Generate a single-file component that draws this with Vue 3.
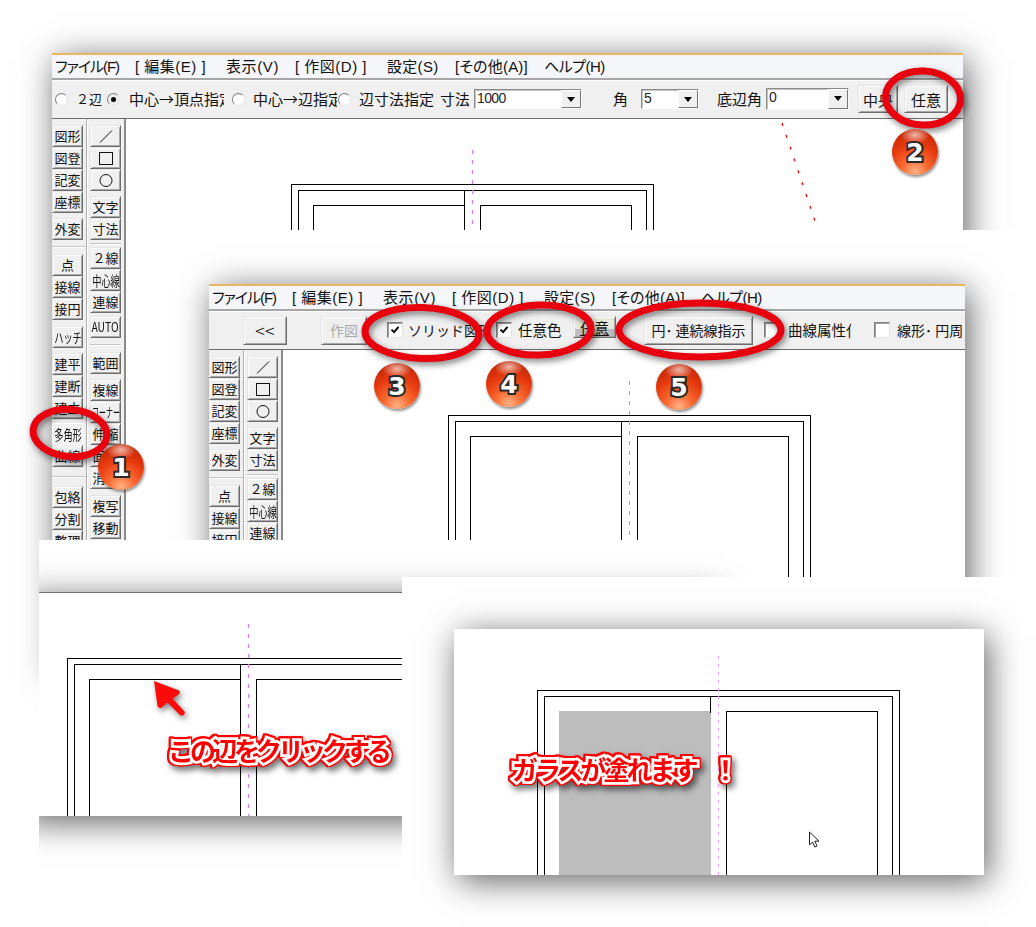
<script setup>
const menus = [
  { t: 'ファイル(F)', w: 65, ls: -1 }, { t: '[ 編集(E) ]', w: 76, ls: .5 }, { t: '表示(V)', w: 54, ls: .6 }, { t: '[ 作図(D) ]', w: 77, ls: .5 },
  { t: '設定(S)', w: 53, ls: .3 }, { t: '[その他(A)]', w: 74, ls: .2 }, { t: 'ヘルプ(H)', w: 60, ls: -.5 }
]

function col(list) {
  let y = 0
  return list.map(([t, top]) => {
    const sep = t === '-'
    const item = { t, sep, m: top - 119 - y }
    y = top - 119 + (sep ? 2 : 22)
    return item
  })
}
const colA = col([['図形', 125], ['図登', 147], ['記変', 169], ['座標', 191], ['外変', 218], ['-', 246], ['点', 254], ['接線', 276], ['接円', 298], ['ハッチ', 326], ['建平', 353], ['建断', 375], ['建立', 397], ['多角形', 423], ['曲線', 445], ['-', 476], ['包絡', 486], ['分割', 508], ['整理', 530]])
const colB = col([['line', 125], ['rect', 147], ['circle', 169], ['文字', 196], ['寸法', 218], ['-', 243], ['２線', 247], ['中心線', 269], ['連線', 291], ['AUTO', 316], ['-', 344], ['範囲', 352], ['複線', 379], ['コーナー', 401], ['伸縮', 423], ['面取', 445], ['消去', 467], ['複写', 495], ['移動', 517]])
const squeezed = { 'ハッチ': 'sq1', '多角形': 'sq1', '中心線': 'sq1', 'コーナー': 'sq2', 'AUTO': 'sq3' }

const layers = [
  { id: 'a', box: { left: 0, top: 0, width: 1036, height: 927 }, win: { left: 52, top: 53, width: 911, height: 620 }, chrome: 'circle', ox: 165, oy: 65, dash: true },
  { id: 'b', box: { left: 126, top: 230, width: 910, height: 347 }, win: { left: 83, top: 54, width: 756, height: 400 }, chrome: 'solid', ox: 165, oy: 65 },
  { id: 'c', box: { left: 39, top: 540, width: 726, height: 387 }, win: { left: -20, top: 52, width: 701, height: 224 }, chrome: 'none', ox: 48, oy: 65 },
  { id: 'd', box: { left: 402, top: 577, width: 634, height: 350 }, win: { left: 52, top: 52, width: 530, height: 246 }, chrome: 'bare', ox: 83, oy: 61, filled: true }
]
const px = (o) => Object.fromEntries(Object.entries(o).map(([k, v]) => [k, v + 'px']))

const rings = [
  { cx: 70, cy: 433, rx: 37, ry: 23.5, r: 5 },
  { cx: 923, cy: 98, rx: 37.5, ry: 27, r: 3 },
  { cx: 422, cy: 333, rx: 57, ry: 25.5, r: 2 },
  { cx: 539, cy: 330, rx: 52, ry: 25, r: -2 },
  { cx: 700, cy: 330, rx: 81, ry: 27, r: 0 }
]
const badges = [
  { n: 1, left: 98, top: 444 },
  { n: 2, left: 892, top: 129 },
  { n: 3, left: 374, top: 363 },
  { n: 4, left: 486, top: 361 },
  { n: 5, left: 656, top: 364 }
]
</script>

<template>
  <div class="page">
    <section v-for="l in layers" :key="l.id" class="layer" :style="px(l.box)">
      <div class="win" :class="'win-' + l.chrome" :style="px(l.win)">
        <template v-if="l.chrome === 'circle' || l.chrome === 'solid'">
          <nav class="menu">
            <span v-for="m in menus" :key="m.t" :style="{ width: m.w + 'px', letterSpacing: m.ls + 'px' }">{{ m.t }}</span>
          </nav>

          <div v-if="l.chrome === 'circle'" class="tools">
            <i class="radio r1"></i><span class="lb l1">２辺</span>
            <i class="radio on r2"></i><span class="lb l2">中心→頂点指定</span>
            <i class="radio r3"></i><span class="lb l3">中心→辺指定</span>
            <i class="radio r4"></i><span class="lb l4">辺寸法指定</span>
            <span class="lb l5">寸法</span>
            <div class="combo c1"><span>1000</span><b></b></div>
            <span class="lb l6">角</span>
            <div class="combo c2"><span>5</span><b></b></div>
            <span class="lb l7">底辺角</span>
            <div class="combo c3"><span>0</span><b></b></div>
            <button class="btn b1">中央</button>
            <button class="btn b2">任意</button>
          </div>

          <div v-else class="tools">
            <button class="btn s1">&lt;&lt;</button>
            <button class="btn s2">作図</button>
            <i class="check k1"><svg viewBox="0 0 16 16"><path d="M4 7.500l3 3 5-6" fill="none" stroke="#000" stroke-width="2.200"/></svg></i>
            <span class="lb m1">ソリッド図形</span>
            <i class="check k2"><svg viewBox="0 0 16 16"><path d="M4 7.500l3 3 5-6" fill="none" stroke="#000" stroke-width="2.200"/></svg></i>
            <span class="lb m2">任意色</span>
            <button class="btn s3">任意</button>
            <button class="btn s4">円･ 連続線指示</button>
            <i class="check k3"></i>
            <span class="lb m3">曲線属性化</span>
            <i class="check k4"></i>
            <span class="lb m4">線形･ 円周</span>
          </div>
        </template>

        <div class="body">
          <aside v-if="l.chrome === 'circle' || l.chrome === 'solid'" class="side">
            <div v-for="(c, ci) in [colA, colB]" :key="ci" class="col" :class="ci ? 'col-b' : 'col-a'">
              <template v-for="(b, i) in c" :key="i">
                <div v-if="b.sep" class="hsep" :style="{ marginTop: b.m + 'px' }"></div>
                <button v-else class="btn tb" :class="{ active: b.t === '多角形' && l.chrome === 'circle' }" :style="{ marginTop: b.m + 'px' }">
                  <svg v-if="b.t === 'line'" width="16" height="16" viewBox="0 0 16 16"><path d="M2 14.500L14 2.500" stroke="#111" fill="none"/></svg>
                  <svg v-else-if="b.t === 'rect'" width="16" height="16" viewBox="0 0 16 16"><rect x="1.500" y="2.500" width="13" height="12" stroke="#111" fill="none"/></svg>
                  <svg v-else-if="b.t === 'circle'" width="16" height="16" viewBox="0 0 16 16"><circle cx="8" cy="8.500" r="6" stroke="#111" fill="none"/></svg>
                  <span v-else :class="squeezed[b.t]">{{ b.t }}</span>
                </button>
              </template>
            </div>
          </aside>

          <div class="canvas">
            <svg v-if="l.dash" class="draw"><line class="reddash" x1="656" y1="4" x2="689" y2="102"/></svg>
            <svg class="draw" shape-rendering="crispEdges">
              <g :transform="`translate(${l.ox} ${l.oy})`">
                <rect x="0.500" y="0.500" width="362" height="900" class="ln"/>
                <rect x="7.500" y="6.500" width="348" height="900" class="ln"/>
                <line x1="181.500" y1="-34" x2="181.500" y2="400" class="pink" :class="{ thin: l.filled }"/>
                <template v-if="l.filled">
                  <rect x="22" y="21" width="152" height="400" fill="#bdbdbd"/>
                  <line x1="173.500" y1="6" x2="173.500" y2="23" class="ln"/>
                </template>
                <template v-else>
                  <rect x="22.500" y="21.500" width="151" height="900" class="ln"/>
                  <line x1="173.500" y1="6" x2="173.500" y2="21" class="ln"/>
                </template>
                <rect x="189.500" y="21.500" width="151" height="900" class="ln"/>
              </g>
            </svg>
          </div>
        </div>
      </div>
    </section>

    <svg class="marks" width="1036" height="927">
      <ellipse v-for="(e, i) in rings" :key="i" :cx="e.cx" :cy="e.cy" :rx="e.rx" :ry="e.ry" :transform="`rotate(${e.r} ${e.cx} ${e.cy})`" class="ring"/>
      <path d="M154 681L179 690.500Q181 692.500 178.500 694.500L172.500 698.500L184.500 711.500Q185.500 714.500 182.500 715.500L180.500 715.500L167.500 702.500L161 708Q158 708.500 157.500 706Z" fill="#ff0a0a"/>
    </svg>
    <svg class="pointer" width="14" height="18" viewBox="0 0 14 18">
      <path d="M1.500 1v13l3-3 2.200 5 2.300-1-2.200-4.800H11z" fill="#fff" stroke="#222" stroke-width="1"/>
    </svg>

    <div v-for="b in badges" :key="b.n" class="badge" :style="px({ left: b.left, top: b.top })">
      <span>{{ b.n }}</span>
    </div>

    <div class="call call-a">この辺をクリックする</div>
    <div class="call call-b">ガラスが塗れます<span class="bang">！</span></div>
  </div>
</template>

<style>
html, body { margin: 0; background: #fff; }
</style>

<style scoped>
.page {
  position: relative;
  width: 1036px;
  height: 927px;
  overflow: hidden;
  background: #fff;
  font-family: "Noto Sans CJK JP", sans-serif;
  color: #111;
}
.layer { position: absolute; overflow: hidden; background: #fff; }
.win {
  position: absolute;
  display: flex;
  flex-direction: column;
  background: #fff;
  box-shadow: 4px 6px 32px rgba(0, 0, 0, .62);
}
.win-circle, .win-solid { border-top: 2px solid #e9b75f; box-sizing: border-box; }
.win-none { border-top: 1px solid #707070; box-sizing: border-box; }

.menu {
  height: 23px;
  box-sizing: border-box;
  display: flex;
  gap: 15px;
  align-items: center;
  padding-left: 3px;
  background: #f5f6f9;
  font-family: "Liberation Sans", "Noto Sans CJK JP", sans-serif;
  font-feature-settings: "palt";
  font-size: 15px;
  line-height: 23px;
  white-space: nowrap;
}
.menu span { display: block; flex: none; }
.tools {
  height: 41px;
  box-sizing: border-box;
  display: flex;
  align-items: center;
  background: #f0f0f0;
  border-top: 2px solid #a6a6a6;
  border-bottom: 1px solid #6d6d6d;
  box-shadow: inset 0 1px 0 #fff;
  font-size: 15px;
  white-space: nowrap;
}
.lb { display: block; overflow: hidden; flex: none; line-height: 20px; }
.radio {
  display: block; flex: none; width: 13px; height: 13px; box-sizing: border-box;
  border-radius: 50%; background: #fff; position: relative;
  border: 1px solid; border-color: #7f7f7f #e4e4e4 #e4e4e4 #7f7f7f;
}
.radio.on { background: #eee; }
.radio.on::after {
  content: ""; position: absolute; left: 3px; top: 3px; width: 5px; height: 5px;
  border-radius: 50%; background: #000;
}
.r1 { margin-left: 3px; } .l1 { margin-left: 8px; width: 26px; font-size: 13px; }
.r2 { margin-left: 5px; } .l2 { margin-left: 9px; width: 95px; }
.r3 { margin-left: 8px; } .l3 { margin-left: 8px; width: 84px; }
.r4 { margin-left: 1px; } .l4 { margin-left: 8px; width: 75px; }
.l5 { margin-left: 6px; width: 29px; }
.c1 { margin-left: 5px; width: 108px; height: 20px; }
.l6 { margin-left: 31px; width: 15px; }
.c2 { margin-left: 13px; width: 58px; height: 20px; }
.l7 { margin-left: 18px; width: 45px; }
.c3 { margin-left: 4px; width: 83px; height: 22px; }
.combo {
  flex: none; box-sizing: border-box; display: flex; justify-content: space-between;
  background: #fff;
  border: 1px solid; border-color: #8a8a8a #fbfbfb #fbfbfb #8a8a8a;
  box-shadow: inset 1px 1px 0 #c4c4c4;
  font-family: "Liberation Sans", sans-serif;
  font-size: 14px; line-height: 17px; padding-left: 2px; color: #222; letter-spacing: -.6px;
}
.combo b {
  flex: none; width: 20px; background: #f0f0f0; position: relative; box-sizing: border-box;
  border: 1px solid; border-color: #fff #777 #777 #fff;
}
.combo b::after {
  content: ""; position: absolute; left: 5px; top: 6px;
  border: 4px solid transparent; border-top: 5px solid #000; border-bottom: 0;
}

.btn {
  display: flex; align-items: center; justify-content: center; flex: none;
  box-sizing: border-box; margin: 0; padding: 0;
  font: inherit; color: #111; white-space: nowrap; overflow: hidden;
  background: #f0f0f0;
  border: 1px solid; border-color: #e6e6e6 #6e6e6e #6e6e6e #e6e6e6;
  box-shadow: inset 1px 1px 0 #fff, inset -1px -1px 0 #a8a8a8;
}
.b1 { margin-left: 9px; width: 40px; height: 28px; }
.b2 { margin-left: 6px; width: 44px; height: 28px; }
.s1 { margin-left: 34px; width: 44px; height: 29px; font-size: 18px; font-weight: 300; }
.s2 { margin-left: 34px; width: 46px; height: 29px; font-size: 14px; color: #a8a8a8; }
.check {
  display: block; flex: none; width: 16px; height: 16px; box-sizing: border-box; background: #fff;
  border: 1px solid; border-color: #7f7f7f #e4e4e4 #e4e4e4 #7f7f7f;
  box-shadow: inset 1px 1px 0 #a0a0a0;
}
.check svg { display: block; width: 14px; height: 14px; }
.k1 { margin-left: 20px; }
.m1 { margin-left: 5px; width: 76px; font-size: 14px; }
.k2 { margin-left: 12px; }
.m2 { margin-left: 6px; width: 44px; font-size: 14.500px; }
.s3 {
  margin-left: 11px; margin-bottom: 6px; width: 43px; height: 22px; font-size: 14.500px;
  background: linear-gradient(#e9e9da 0 62%, #bcbcbc 62%);
  text-decoration: underline;
}
.s4 { margin-left: 28px; width: 109px; height: 29px; font-size: 14px; }
.k3 { margin-left: 11px; }
.m3 { margin-left: 8px; width: 63px; font-size: 14.500px; }
.k4 { margin-left: 23px; }
.m4 { margin-left: 7px; width: 67px; font-size: 14px; }

.body { flex: 1; min-height: 0; display: flex; }
.side {
  width: 74px; flex: none; box-sizing: border-box; display: flex;
  background: #f0f0f0;
  border-right: 2px solid #8c8c8c;
}
.col { flex: none; width: 31px; display: flex; flex-direction: column; }
.col-a { width: 34px; border-right: 1px solid #b0b0b0; box-shadow: 1px 0 0 #fff; }
.col-b { margin-left: 3px; width: 31px; }
.col-a .tb { width: 31px; }
.hsep { flex: none; height: 2px; background: #fff; border-top: 1px solid #c4c4c4; box-sizing: border-box; }
.tb { width: 31px; height: 22px; font-size: 13px; line-height: 20px; }
.tb.active {
  background: repeating-conic-gradient(#fff 0 25%, #e8e8e8 0 50%) 0 0 / 2px 2px;
  box-shadow: none;
  border-color: #fff;
}
.sq1 { display: inline-block; font-size: 14px; transform: scaleX(.66); }
.sq2 { display: inline-block; transform: scaleX(.54); }
.sq3 { display: inline-block; transform: scaleX(.8); }

.canvas { flex: 1; min-width: 0; position: relative; background: #fff; overflow: hidden; }
.draw { position: absolute; inset: 0; width: 100%; height: 100%; }
.ln { fill: none; stroke: #000; stroke-width: 1; }
.pink { stroke: #ff70f0; stroke-width: 1; stroke-dasharray: 4 6; }
.pink.thin { stroke: #f3a0f3; stroke-dasharray: 3 5; }
.reddash { stroke: #f40000; stroke-width: 1.300; stroke-dasharray: 3 9.500; }

.marks {
  position: absolute; left: 0; top: 0; pointer-events: none;
  filter: drop-shadow(2px 3px 3px rgba(0, 0, 0, .5));
}
.ring { fill: none; stroke: #e8000f; stroke-width: 7; }
.pointer { position: absolute; left: 808px; top: 831px; }

.badge {
  position: absolute; width: 46px; height: 46px; border-radius: 50%;
  display: flex; align-items: center; justify-content: center;
  background:
    radial-gradient(ellipse 32% 20% at 50% 13%, rgba(255, 255, 255, .65), rgba(255, 255, 255, 0) 100%),
    radial-gradient(circle at 50% 92%, #ffb184 0, #f9682f 28%, #e5380d 58%, #c42806 85%, #a82004 100%);
  box-shadow: 1px 2px 3px rgba(0, 0, 0, .45);
}
.badge span {
  font: 700 25px/1 "DejaVu Sans", sans-serif;
  color: #fff;
  -webkit-text-stroke: 4px #2a2a2a;
  paint-order: stroke fill;
}

.call {
  position: absolute;
  font-family: "Noto Sans CJK JP", sans-serif;
  font-weight: 700;
  color: #f00;
  line-height: 1;
  white-space: nowrap;
  -webkit-text-stroke: 5.500px #fff;
  paint-order: stroke fill;
  filter: drop-shadow(1.500px 0 0 #f00) drop-shadow(-1.500px 0 0 #f00) drop-shadow(0 1.500px 0 #f00) drop-shadow(0 -1.500px 0 #f00) drop-shadow(3px 4px 3px rgba(0, 0, 0, .55));
}
.call-a { left: 168px; top: 737px; font-size: 26px; letter-spacing: -4px; }
.call-b { left: 512px; top: 756px; font-size: 26px; letter-spacing: -3px; }
.bang { margin-left: 17px; }
</style>
